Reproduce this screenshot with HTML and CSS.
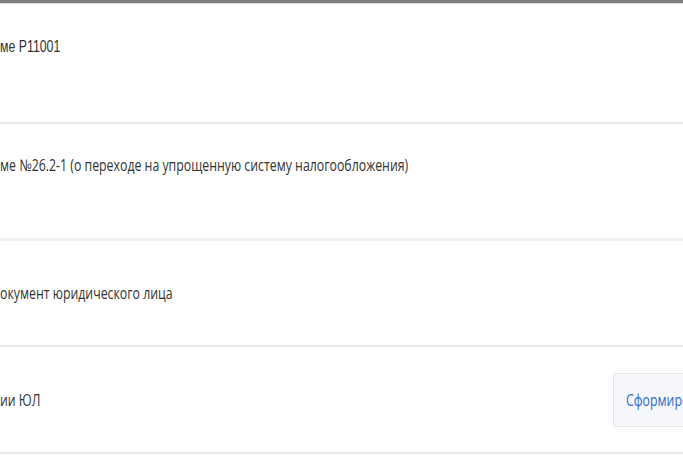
FILE: index.html
```html
<!DOCTYPE html>
<html lang="ru">
<head>
<meta charset="utf-8">
<link rel="stylesheet" href="styles.css">
</head>
<body>
<div class="topbar"></div>
<div class="list">
  <div class="row row-1">
    <span class="label label-alt">ме Р11001</span>
  </div>
  <div class="row row-2">
    <span class="label">ме №26.2-1 (о переходе на упрощенную систему налогообложения)</span>
  </div>
  <div class="row row-3">
    <span class="label">окумент юридического лица</span>
  </div>
  <div class="row row-4">
    <span class="label">ии ЮЛ</span>
    <button class="btn"><span class="btn-text">Сформировать</span></button>
  </div>
</div>
</body>
</html>
```

FILE: styles.css
```css
html, body {
  margin: 0;
  padding: 0;
  background: #ffffff;
  overflow: hidden;
}
body {
  font-family: "Open Sans", "Noto Sans", sans-serif;
  color: #333333;
  width: 683px;
  height: 457px;
}
.topbar {
  height: 3px;
  background: #7d7d7d;
  border-bottom: 1px solid #dcdcdc;
}
.list {
  display: flex;
  flex-direction: column;
}
.row {
  display: flex;
  align-items: center;
  justify-content: space-between;
  border-bottom: 2px solid #e9e9e9;
  box-sizing: border-box;
  overflow: hidden;
}
.row-1 {
  height: 120px;
  align-items: flex-start;
  padding-top: 33px;
}
.row-2 {
  height: 117px;
  align-items: flex-start;
  padding-top: 31px;
  border-bottom: 3px solid #f1f1f1;
}
.row-3 {
  height: 106px;
}
.row-4 {
  height: 107px;
}
.label {
  display: inline-block;
  font-size: 16px;
  line-height: 20px;
  white-space: nowrap;
  transform: scaleX(0.77);
  transform-origin: left center;
}
.label-alt {
  font-family: "Liberation Sans", Arial, sans-serif;
}
.btn {
  margin-right: -60px;
  width: 130px;
  height: 54px;
  background: #f5f7fa;
  border: 1px solid #e1e4e8;
  border-radius: 2px;
  padding: 0 0 0 12px;
  text-align: left;
  font-family: "Open Sans", "Noto Sans", sans-serif;
  font-size: 16px;
  color: #2f6bd0;
}
.btn-text {
  display: inline-block;
  transform: scaleX(0.77);
  transform-origin: left center;
  white-space: nowrap;
}
```
